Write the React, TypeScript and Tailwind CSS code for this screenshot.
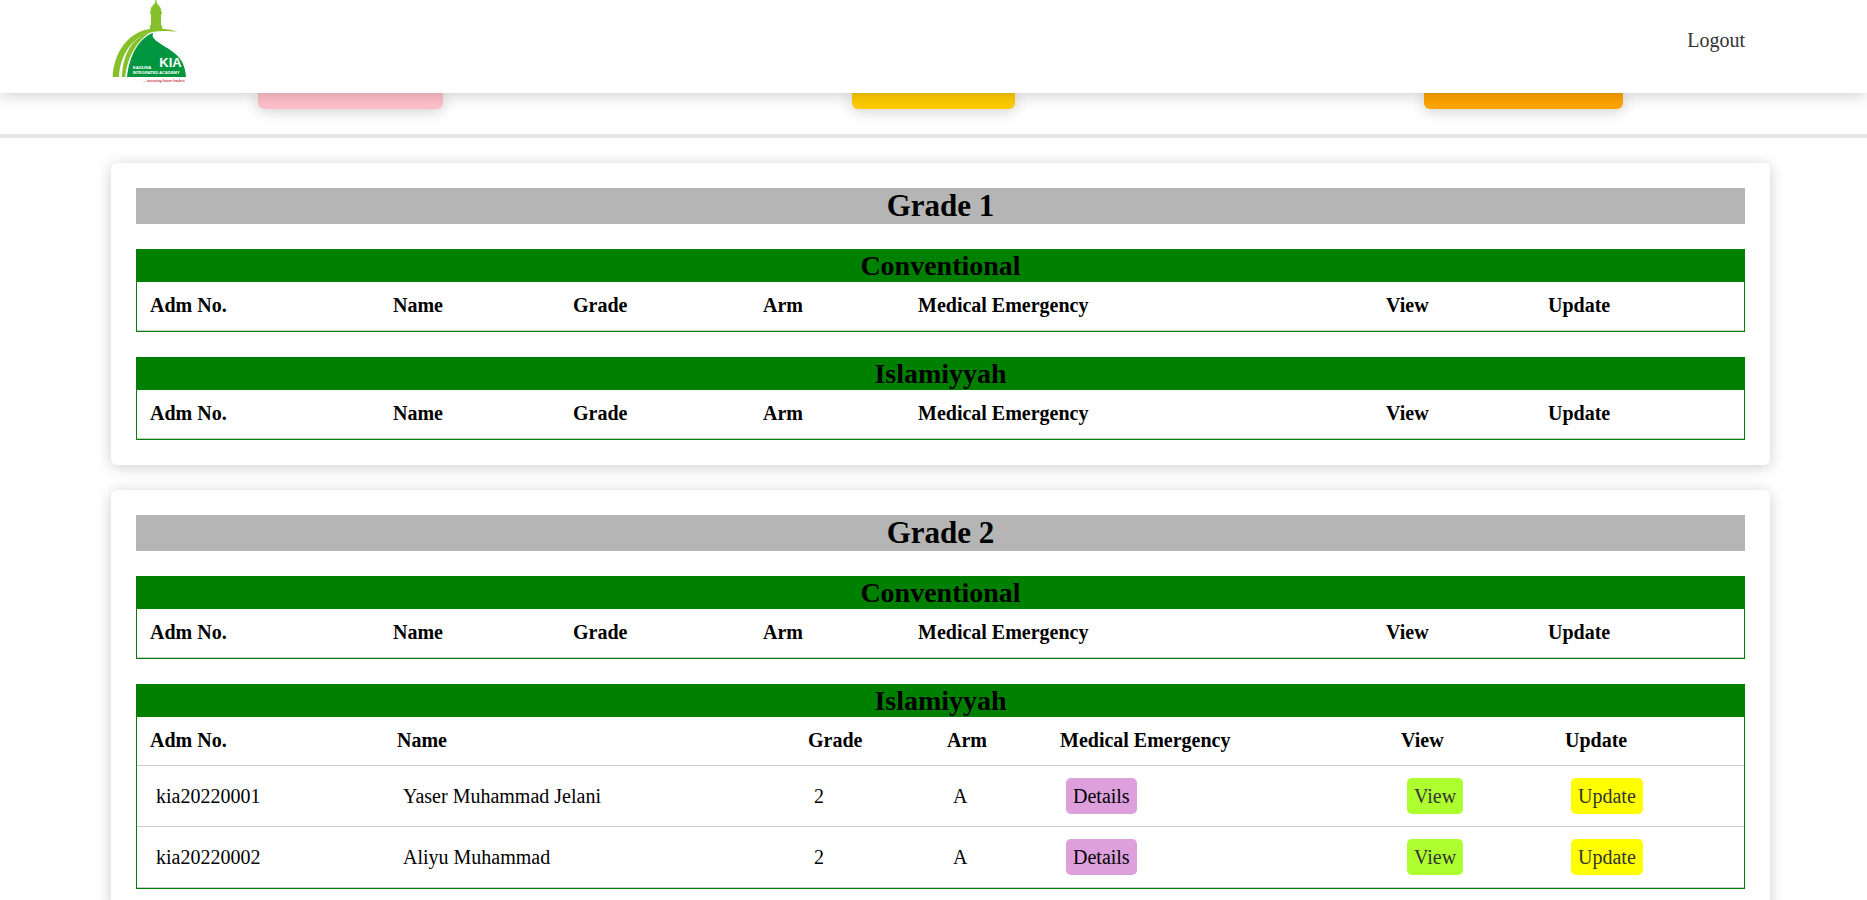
type Student = { adm: string; name: string; grade: string; arm: string };

const HEADINGS = ["Adm No.", "Name", "Grade", "Arm", "Medical Emergency", "View", "Update"];

const EMPTY_COLUMNS = ["w-[243px]", "w-[180px]", "w-[190px]", "w-[155px]", "w-[468px]", "w-[162px]", "w-[209px]"];
const FILLED_COLUMNS = ["w-[247px]", "w-[411px]", "w-[139px]", "w-[113px]", "w-[341px]", "w-[164px]", "w-[192px]"];

const GRADES: { title: string; sections: { title: string; students: Student[] }[] }[] = [
  {
    title: "Grade 1",
    sections: [
      { title: "Conventional", students: [] },
      { title: "Islamiyyah", students: [] },
    ],
  },
  {
    title: "Grade 2",
    sections: [
      { title: "Conventional", students: [] },
      {
        title: "Islamiyyah",
        students: [
          { adm: "kia20220001", name: "Yaser Muhammad Jelani", grade: "2", arm: "A" },
          { adm: "kia20220002", name: "Aliyu Muhammad", grade: "2", arm: "A" },
        ],
      },
    ],
  },
];

function Logo() {
  return (
    <svg viewBox="36 0 225 249" className="h-[83px] w-[75px]" role="img" aria-label="Kaduna Integrated Academy">
      <path
        fill="#86c02a"
        d="M38 231 C40 165 80 96 150 87 L150 76 H153 V42 H150 V35 H152 V29 C152 20 162 14 165 8 L166 0 H169 L170 8 C173 14 183 20 183 29 V35 H186 V42 H183 V76 H186 L187 86 C204 87 219 90 232 96 C212 93 184 92 162 95 C102 104 60 160 57 231 Z"
      />
      <path fill="#86c02a" d="M66 231 C68 168 92 114 152 96 C112 120 81 172 76 231 Z" />
      <path
        fill="#009640"
        d="M81 231 C88 172 112 116 160 98 C154 108 161 117 175 127 C188 137 200 143 212 151 C240 170 256 192 258 231 Z"
      />
      <g fill="#fff" fontFamily="Liberation Sans, sans-serif" fontWeight="bold">
        <text x="178" y="202" fontSize="39">KIA</text>
        <text x="98" y="208" fontSize="13">KADUNA</text>
        <text x="98" y="223" fontSize="12">INTEGRATED ACADEMY</text>
      </g>
      <text x="130" y="245" fill="#c4393f" fontFamily="Liberation Sans, sans-serif" fontWeight="bold" fontStyle="italic" fontSize="10">
        ... nurturing future leaders
      </text>
    </svg>
  );
}

function SectionTable({ title, students }: { title: string; students: Student[] }) {
  const columns = students.length > 0 ? FILLED_COLUMNS : EMPTY_COLUMNS;
  return (
    <section className="mt-[25px] border border-[#008000]">
      <h3 className="bg-[#008000] text-center text-[28px] leading-8 font-bold">{title}</h3>
      <table aria-label={title} className="w-full table-fixed border-separate border-spacing-0 text-left text-xl leading-6">
        <colgroup>
          {columns.map((width, i) => (
            <col key={i} className={width} />
          ))}
        </colgroup>
        <thead>
          <tr>
            {HEADINGS.map((heading) => (
              <th key={heading} scope="col" className="border-b border-[#ccc] px-[13px] pt-[11px] pb-[13px] font-bold">
                {heading}
              </th>
            ))}
          </tr>
        </thead>
        <tbody>
          {students.map((s) => (
            <tr key={s.adm} className="h-[61px] *:border-b *:border-[#ccc] *:px-[19px] *:py-3">
              <td>{s.adm}</td>
              <td>{s.name}</td>
              <td>{s.grade}</td>
              <td>{s.arm}</td>
              <td>
                <button type="button" className="block rounded-[5px] bg-[#dda0dd] px-[7px] py-1.5">Details</button>
              </td>
              <td>
                <a href="#view" className="block w-fit rounded-[5px] bg-[#adff2f] px-[7px] py-1.5 text-[#333]">View</a>
              </td>
              <td>
                <a href="#update" className="block w-fit rounded-[5px] bg-[#ffff00] px-[7px] py-1.5 text-[#333]">Update</a>
              </td>
            </tr>
          ))}
        </tbody>
      </table>
    </section>
  );
}

export default function App() {
  return (
    <div className="h-screen overflow-hidden bg-white font-['Liberation_Serif',serif] text-black">
      <header className="relative z-10 flex h-[93px] items-start justify-between bg-white pr-[122px] pl-[112px] shadow-[0_2px_15px_rgba(0,0,0,0.2)]">
        <Logo />
        <a href="#logout" className="mt-7 text-xl leading-6 text-[#333]">Logout</a>
      </header>
      <div className="flex justify-around border-b-4 border-[#e5e5e5] pr-10 pb-[25px] pl-[53px]">
        <div className="h-4 w-[185px] rounded-b-md bg-[#ffc0cb] shadow-[0_2px_15px_rgba(0,0,0,0.2)]" />
        <div className="h-4 w-[163px] rounded-b-md bg-[#ffcc00] shadow-[0_2px_15px_rgba(0,0,0,0.2)]" />
        <div className="h-4 w-[199px] rounded-b-md bg-[#ffa500] shadow-[0_2px_15px_rgba(0,0,0,0.2)]" />
      </div>
      <main className="flex flex-col gap-[25px] pt-[25px] pr-[97px] pl-[111px]">
        {GRADES.map((grade) => (
          <article key={grade.title} className="rounded-md p-[25px] shadow-[0_2px_15px_rgba(0,0,0,0.2)]">
            <h2 className="bg-[#b5b5b5] text-center text-[31px] leading-9 font-bold">{grade.title}</h2>
            {grade.sections.map((section) => (
              <SectionTable key={section.title} {...section} />
            ))}
          </article>
        ))}
      </main>
    </div>
  );
}
